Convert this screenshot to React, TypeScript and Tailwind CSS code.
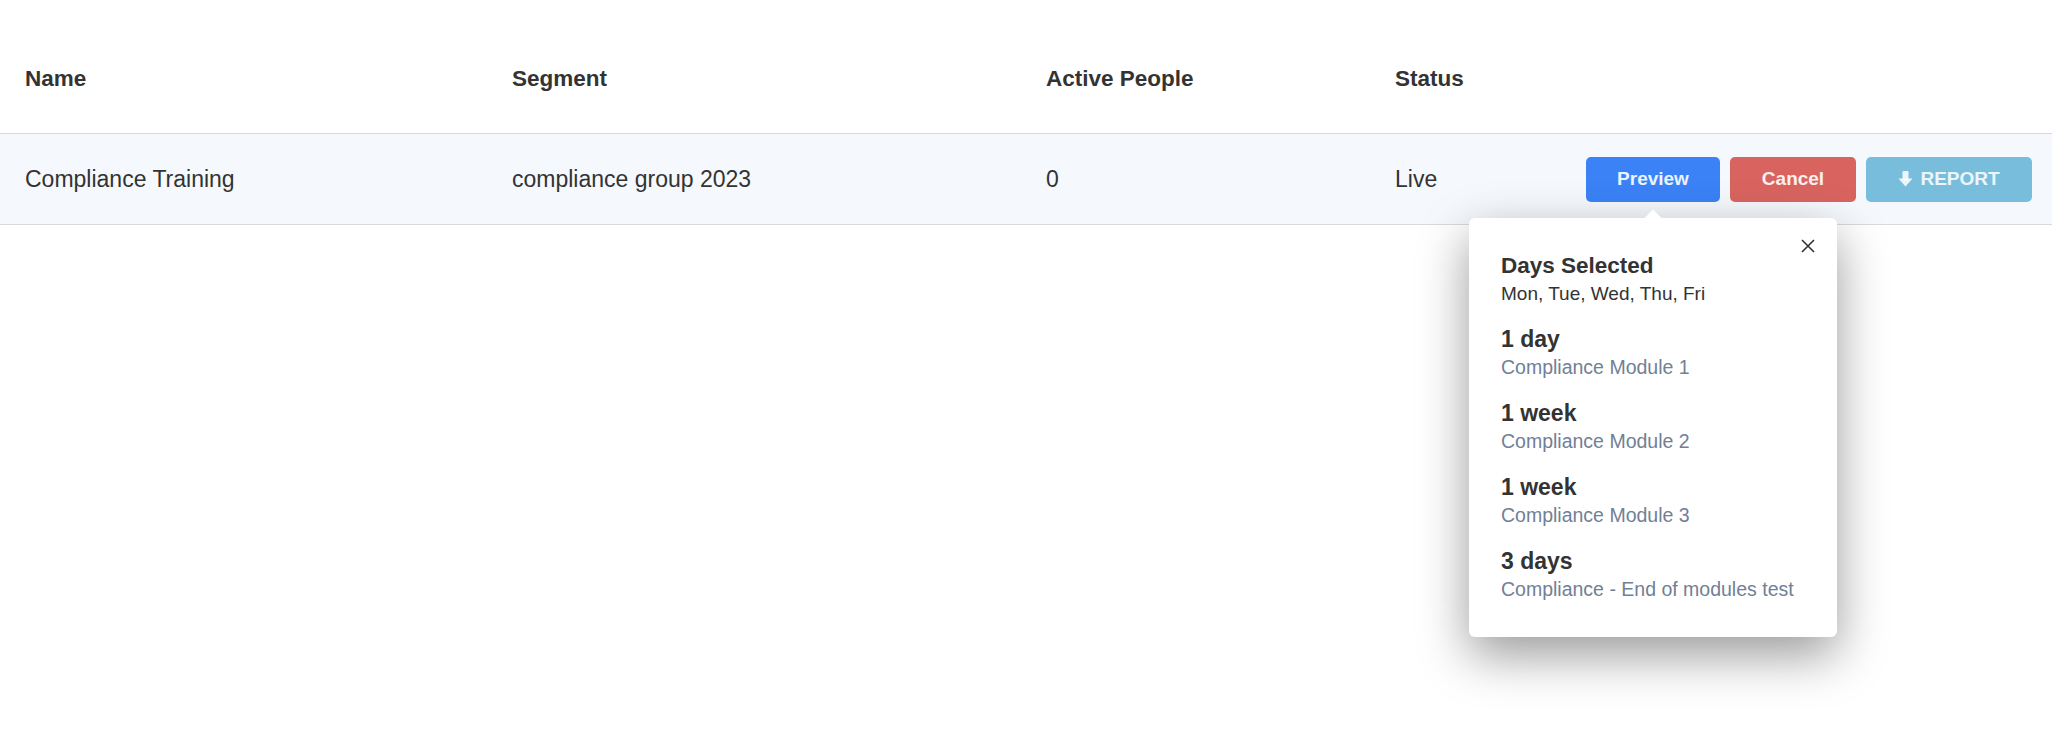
const font = "font-['Liberation_Sans',Arial,sans-serif]";

const steps = [
  { label: "1 day", module: "Compliance Module 1" },
  { label: "1 week", module: "Compliance Module 2" },
  { label: "1 week", module: "Compliance Module 3" },
  { label: "3 days", module: "Compliance - End of modules test" },
];

function DownArrow() {
  return (
    <svg width="15" height="16" viewBox="0 0 15 16" className="fill-current">
      <rect x="4.5" y="0" width="6" height="9" rx="1" />
      <path d="M0.5 7.5 H14.5 L7.5 15.5 Z" />
    </svg>
  );
}

function PreviewPopover() {
  return (
    <div className="absolute top-[61px] left-[-117px] z-10 w-[368px] rounded-[6px] bg-white font-normal shadow-[0_18px_50px_rgba(0,0,0,0.4)]">
      <div className="absolute top-[-6px] left-[178px] w-[12px] h-[12px] rotate-45 bg-white" />
      <button className="absolute top-[21px] right-[22px] text-[#333]">
        <svg width="14" height="14" viewBox="0 0 14 14" stroke="currentColor" strokeWidth="1.6">
          <path d="M1 1 L13 13 M13 1 L1 13" />
        </svg>
      </button>
      <div className="relative flex flex-col gap-[18px] px-[32px] pt-[33px] pb-[34px] whitespace-nowrap">
        <div>
          <p className="text-[22.5px] leading-[29px] font-bold text-[#333]">Days Selected</p>
          <p className="text-[19px] leading-[27px] text-[#333]">Mon, Tue, Wed, Thu, Fri</p>
        </div>
        {steps.map((s, i) => (
          <div key={i}>
            <p className="text-[23px] leading-[29px] font-bold text-[#333]">{s.label}</p>
            <p className="text-[19.5px] leading-[27px] text-[#718096]">{s.module}</p>
          </div>
        ))}
      </div>
    </div>
  );
}

export default function App() {
  return (
    <div className={`${font} w-[2052px] h-[732px] bg-white text-[#333] overflow-hidden`}>
      <div className="mt-[24px]">
        <div className="grid grid-cols-[487px_534px_349px_1fr] items-center h-[110px] pl-[25px] pr-[20px] border-b border-[#d9d9d9] text-[22.5px] font-bold">
          <div>Name</div>
          <div>Segment</div>
          <div>Active People</div>
          <div>Status</div>
        </div>
        <div className="grid grid-cols-[487px_534px_349px_1fr] items-center h-[91px] pl-[25px] pr-[20px] bg-[#f5f9fe] border-b border-[#d9d9d9] text-[23px]">
          <div>Compliance Training</div>
          <div>compliance group 2023</div>
          <div>0</div>
          <div className="flex items-center justify-between">
            <span>Live</span>
            <div className="flex items-center gap-[10px] text-[19px]">
              <div className="relative">
                <button className="w-[134px] h-[45px] rounded-[5px] bg-[#3b82f6] text-white/90 font-semibold">Preview</button>
                <PreviewPopover />
              </div>
              <button className="w-[126px] h-[45px] rounded-[5px] bg-[#d9645f] text-white/90 font-semibold">Cancel</button>
              <button className="w-[166px] h-[45px] rounded-[5px] bg-[#78bedc] text-white/85 font-semibold flex items-center justify-center gap-[7px]">
                <DownArrow />
                REPORT
              </button>
            </div>
          </div>
        </div>
      </div>
    </div>
  );
}
